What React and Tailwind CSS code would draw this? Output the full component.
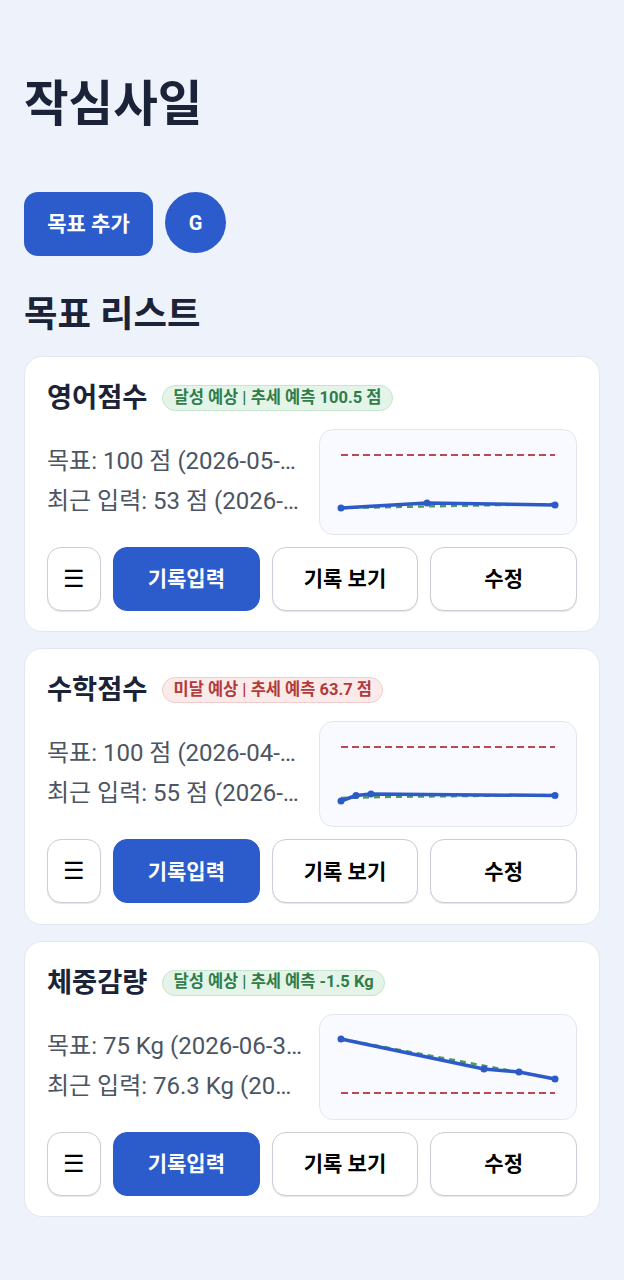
import React from 'react';

const goals = [
  {
    name: '영어점수',
    status: 'good',
    badge: '달성 예상 | 추세 예측 100.5 점',
    target: '목표: 100 점 (2026-05-31)',
    latest: '최근 입력: 53 점 (2026-01-15)',
    red: 25,
    green: '21,78 235,74',
    blue: [[21, 78], [107, 73], [235, 75]],
  },
  {
    name: '수학점수',
    status: 'bad',
    badge: '미달 예상 | 추세 예측 63.7 점',
    target: '목표: 100 점 (2026-04-30)',
    latest: '최근 입력: 55 점 (2026-01-15)',
    red: 25,
    green: '21,76 60,75 235,73',
    blue: [[21, 79], [36, 73.5], [51, 72], [235, 73.5]],
  },
  {
    name: '체중감량',
    status: 'good',
    badge: '달성 예상 | 추세 예측 -1.5 Kg',
    target: '목표: 75 Kg (2026-06-30)',
    latest: '최근 입력: 76.3 Kg (2026-01-15)',
    red: 78,
    green: '21,24 235,64',
    blue: [[21, 24], [164, 54], [199, 57], [235, 64]],
  },
];

function Chart({ goal }) {
  const points = goal.blue.map((p) => p.join(',')).join(' ');
  return (
    <div className="w-[258px] h-[106px] shrink-0 rounded-[14px] border border-[#e2e6ee] bg-[#f8faff]">
      <svg width="256" height="104" viewBox="0 0 256 104" className="block">
        <line x1="21" y1={goal.red} x2="235" y2={goal.red} stroke="#bb4a50" strokeWidth="2" strokeDasharray="7 4" />
        <polyline points={goal.green} fill="none" stroke="#4c9a5e" strokeWidth="2.5" strokeDasharray="6 5" />
        <polyline points={points} fill="none" stroke="#2c5bc8" strokeWidth="3.5" strokeLinejoin="round" />
        {goal.blue.map((p, i) => (
          <circle key={i} cx={p[0]} cy={p[1]} r="3.5" fill="#2c5bc8" />
        ))}
      </svg>
    </div>
  );
}

function GoalCard({ goal }) {
  const badgeClass =
    goal.status === 'good'
      ? 'bg-[#e5f4e9] border-[#c5e5cd] text-[#2f7d4a]'
      : 'bg-[#fbeaea] border-[#f2cccc] text-[#b23b3b]';
  const whiteBtn = 'flex-1 pt-0.5 rounded-[14px] border border-[#c9ced6] bg-white text-[21px] font-bold text-black shadow-[0_1px_1px_rgba(0,0,0,0.1)]';
  return (
    <div className="rounded-[18px] border border-[#e3e8f0] bg-white pt-[26px] pb-[20.4px] px-[22px]">
      <div className="flex items-center h-[30px] mb-4">
        <span className="text-[27.3px] font-bold leading-[30px] text-[#1a2338]">{goal.name}</span>
        <span className={`ml-[15px] h-[26px] flex items-center rounded-full border px-[10px] text-[16.5px] font-bold whitespace-nowrap ${badgeClass}`}>
          {goal.badge}
        </span>
      </div>
      <div className="flex justify-between mb-3">
        <div className="w-[256px] pt-3 text-[24px] leading-[40px] text-[#4b5563]">
          <div className="truncate">{goal.target}</div>
          <div className="truncate">{goal.latest}</div>
        </div>
        <Chart goal={goal} />
      </div>
      <div className="flex gap-3 h-16">
        <button className="w-[54px] shrink-0 rounded-[14px] border border-[#c9ced6] bg-white text-[24px] text-black shadow-[0_1px_1px_rgba(0,0,0,0.1)]">☰</button>
        <button className="flex-1 pt-0.5 rounded-[14px] border border-[#2c5bcb] bg-[#2c5bcb] text-[21px] font-bold text-white">기록입력</button>
        <button className={whiteBtn}>기록 보기</button>
        <button className={whiteBtn}>수정</button>
      </div>
    </div>
  );
}

export default function App() {
  return (
    <div className="min-h-screen bg-[#eef3fb] px-6 pt-[75px] font-['Roboto','Noto_Sans_CJK_KR',sans-serif]">
      <h1 className="h-[60px] mb-[57px] text-[48.5px] font-bold leading-[60px] text-[#1a2338]">작심사일</h1>
      <div className="flex items-start gap-3 mb-[37px]">
        <button className="w-[129px] h-16 pt-0.5 rounded-[14px] bg-[#2c5bcb] text-[21px] font-bold text-white">목표 추가</button>
        <div className="w-[61px] h-[61px] rounded-full bg-[#2c5bcb] flex items-center justify-center text-[20px] font-bold text-white">G</div>
      </div>
      <h2 className="h-11 mb-[19px] text-[36.4px] font-bold leading-[44px] text-[#1a2338]">목표 리스트</h2>
      <div className="flex flex-col gap-4">
        {goals.map((g) => (
          <GoalCard key={g.name} goal={g} />
        ))}
      </div>
    </div>
  );
}
